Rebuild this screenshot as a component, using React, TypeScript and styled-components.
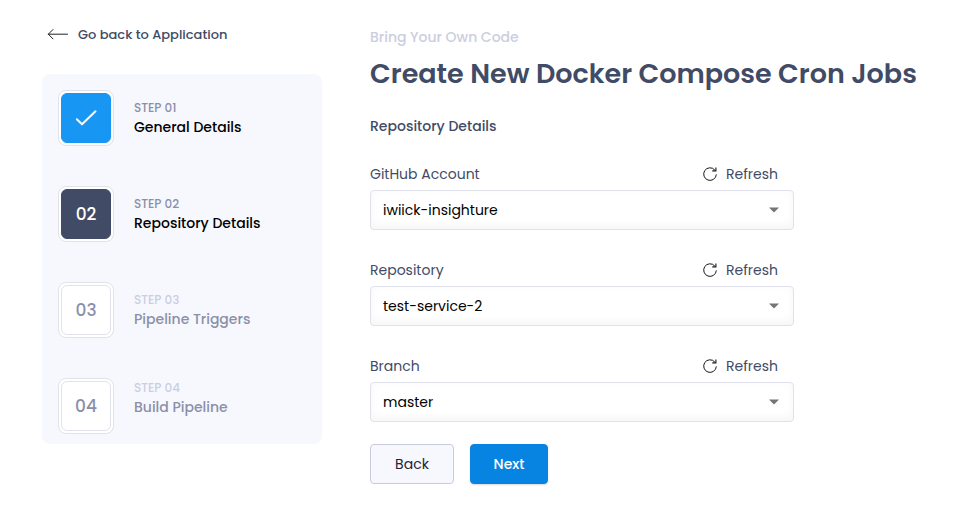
import React from "react";
import styled, { createGlobalStyle } from "styled-components";

const Global = createGlobalStyle`
  *, *::before, *::after { box-sizing: border-box; }
  body { margin: 0; background: #fff; font-family: Poppins, Inter, sans-serif; }
`;

const Page = styled.main`
  display: flex;
  align-items: flex-start;
  width: 964px;
  height: 530px;
  overflow: hidden;
`;

const Text = styled.span<{ $size: number; $weight?: number; $color: string; $line?: number }>`
  display: block;
  width: max-content;
  white-space: nowrap;
  font-size: ${(p) => p.$size}px;
  font-weight: ${(p) => p.$weight ?? 400};
  color: ${(p) => p.$color};
  line-height: ${(p) => p.$line ?? 20}px;
`;

const Sidebar = styled.aside`
  width: 280px;
  margin-left: 42px;
  padding-top: 24px;
`;

const BackLink = styled.a`
  display: flex;
  align-items: center;
  gap: 9px;
  height: 20px;
  padding-left: 5px;
`;

const Steps = styled.ol`
  display: flex;
  flex-direction: column;
  gap: 40px;
  height: 370px;
  margin: 30px 0 0;
  padding: 16px;
  list-style: none;
  background: #f7f8fe;
  border-radius: 8px;
`;

const Step = styled.li`
  display: flex;
  gap: 20px;
  height: 56px;
`;

const Frame = styled.div`
  width: 56px;
  height: 56px;
  padding: 2px;
  border: 1px solid #e1e3ec;
  border-radius: 8px;
  background: #fff;
`;

type State = "done" | "active" | "todo";
const fills = { done: "#1896f3", active: "#414b66", todo: "#fff" };

const Badge = styled.div<{ $state: State }>`
  display: flex;
  align-items: center;
  justify-content: center;
  width: 50px;
  height: 50px;
  border-radius: 6px;
  border: 1px solid ${(p) => (p.$state === "todo" ? "#e1e3ec" : fills[p.$state])};
  background: ${(p) => fills[p.$state]};
`;

const StepText = styled.div<{ $last: boolean }>`
  padding-top: ${(p) => (p.$last ? 0 : 8)}px;
`;

const Content = styled.section`
  width: 560px;
  margin-left: 48px;
  padding-top: 27px;
`;

const Title = styled.h1`
  margin: 7px 0 22px;
`;

const Fields = styled.div`
  padding-top: 14px;
`;

const Field = styled.div`
  width: 424px;
  margin-bottom: 16px;
`;

const FieldHead = styled.div`
  display: flex;
  align-items: center;
  justify-content: space-between;
  height: 40px;
  padding: 8px 16px 0 0;
`;

const Refresh = styled.button`
  display: flex;
  align-items: center;
  gap: 8px;
  width: 76px;
  padding: 0;
  border: 0;
  background: none;
  font: inherit;
`;

const Select = styled.div`
  display: flex;
  align-items: center;
  justify-content: space-between;
  height: 40px;
  padding: 0 14px 0 12px;
  border: 1px solid #dfe1ec;
  border-radius: 4px;
  background: #fff;
  box-shadow: inset 0 -3px 10px rgba(0, 0, 0, 0.045);
`;

const Actions = styled.div`
  display: flex;
  gap: 16px;
  margin-top: 22px;
`;

const Button = styled.button<{ $primary?: boolean }>`
  display: flex;
  align-items: center;
  justify-content: center;
  width: ${(p) => (p.$primary ? 78 : 84)}px;
  height: 40px;
  padding: 0;
  font: inherit;
  border: 1px solid ${(p) => (p.$primary ? "#0783e1" : "#c9cbdc")};
  border-radius: 4px;
  background: ${(p) => (p.$primary ? "#0783e1" : "#f7f8fe")};
  box-shadow: ${(p) => (p.$primary ? "0 1px 2px rgba(0, 0, 0, 0.16)" : "none")};
`;

const BackLabel = styled.div`
  padding-top: 1px;
`;

const ArrowLeft = () => (
  <svg width="22" height="14" viewBox="0 0 22 14" fill="none" stroke="#222" strokeLinecap="round" strokeLinejoin="round">
    <path d="M20.5 7.2H1.3M6 2.5 1.3 7.2 6 11.9" />
  </svg>
);

const Check = () => (
  <svg width="24" height="20" viewBox="0 0 24 20" fill="none" stroke="#fff" strokeWidth="2" strokeLinecap="round" strokeLinejoin="round">
    <path d="M2.8 11.2 8 16.2 21.5 3.2" />
  </svg>
);

const RefreshIcon = () => (
  <svg width="16" height="16" viewBox="0 0 16 16" fill="none" stroke="#161616">
    <path d="M14.3 8.4A6.3 6.3 0 1 1 12.8 4" />
    <path d="M13.9 1.4V4.9H10.3" strokeWidth="1.1" />
  </svg>
);

const Caret = () => (
  <svg width="10" height="6" viewBox="0 0 10 6">
    <path d="M0 .5h10L5 5.5z" fill="#757575" />
  </svg>
);

const steps: { n: string; title: string; state: State }[] = [
  { n: "01", title: "General Details", state: "done" },
  { n: "02", title: "Repository Details", state: "active" },
  { n: "03", title: "Pipeline Triggers", state: "todo" },
  { n: "04", title: "Build Pipeline", state: "todo" },
];

const fields = [
  { label: "GitHub Account", value: "iwiick-insighture" },
  { label: "Repository", value: "test-service-2" },
  { label: "Branch", value: "master" },
];

export default function App() {
  return (
    <>
      <Global />
      <Page>
        <Sidebar>
          <BackLink>
            <ArrowLeft />
            <BackLabel>
              <Text $size={13} $weight={500} $color="#414b66">Go back to Application</Text>
            </BackLabel>
          </BackLink>
          <Steps>
            {steps.map((s, i) => (
              <Step key={s.n}>
                <Frame>
                  <Badge $state={s.state}>
                    {s.state === "done" ? <Check /> : (
                      <Text $size={17} $weight={500} $color={s.state === "active" ? "#fff" : "#8b8fa8"}>{s.n}</Text>
                    )}
                  </Badge>
                </Frame>
                <StepText $last={i === steps.length - 1}>
                  <Text $size={12} $weight={500} $line={19} $color={s.state === "todo" ? "#cbcede" : "#8b8fa8"}>STEP {s.n}</Text>
                  <Text $size={14} $weight={500} $color={s.state === "todo" ? "#8b8fa8" : "#000"}>{s.title}</Text>
                </StepText>
              </Step>
            ))}
          </Steps>
        </Sidebar>
        <Content>
          <Text $size={14} $weight={500} $color="#cbcede">Bring Your Own Code</Text>
          <Title>
            <Text $size={27} $weight={600} $line={40} $color="#414b66">Create New Docker Compose Cron Jobs</Text>
          </Title>
          <Text $size={14} $weight={500} $color="#414b66">Repository Details</Text>
          <Fields>
            {fields.map((f) => (
              <Field key={f.label}>
                <FieldHead>
                  <Text $size={14} $color="#414b66">{f.label}</Text>
                  <Refresh>
                    <RefreshIcon />
                    <Text $size={14} $color="#414b66">Refresh</Text>
                  </Refresh>
                </FieldHead>
                <Select>
                  <Text $size={14} $color="#000">{f.value}</Text>
                  <Caret />
                </Select>
              </Field>
            ))}
          </Fields>
          <Actions>
            <Button><Text $size={14} $color="#1e2438">Back</Text></Button>
            <Button $primary><Text $size={14} $weight={500} $color="#fff">Next</Text></Button>
          </Actions>
        </Content>
      </Page>
    </>
  );
}
